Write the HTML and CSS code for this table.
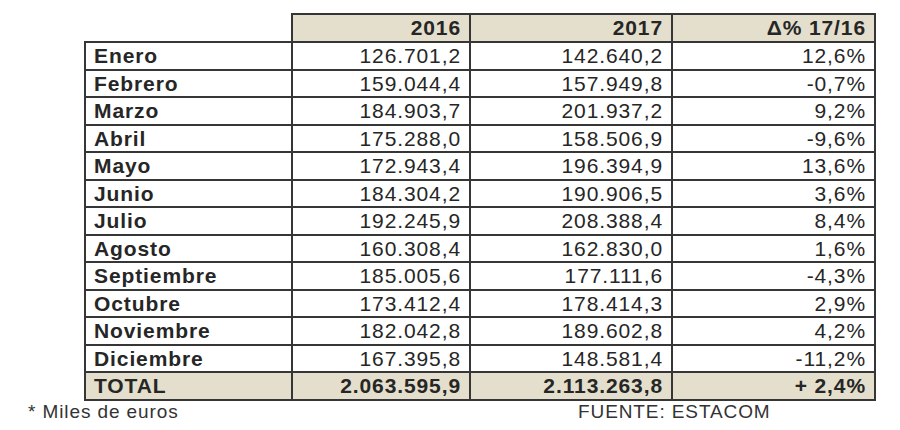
FILE: index.html
```html
<!DOCTYPE html>
<html lang="es">
<head>
<meta charset="utf-8">
<title>Exportaciones 2016-2017</title>
<link rel="stylesheet" href="styles.css">
</head>
<body>
<div class="page">
  <table class="data">
    <colgroup>
      <col class="c-label">
      <col class="c-num1">
      <col class="c-num2">
      <col class="c-pct">
    </colgroup>
    <thead>
      <tr class="head">
        <th class="blank"></th>
        <th>2016</th>
        <th>2017</th>
        <th>&Delta;% 17/16</th>
      </tr>
    </thead>
    <tbody>
      <tr><td class="label">Enero</td><td>126.701,2</td><td>142.640,2</td><td>12,6%</td></tr>
      <tr><td class="label">Febrero</td><td>159.044,4</td><td>157.949,8</td><td>-0,7%</td></tr>
      <tr><td class="label">Marzo</td><td>184.903,7</td><td>201.937,2</td><td>9,2%</td></tr>
      <tr><td class="label">Abril</td><td>175.288,0</td><td>158.506,9</td><td>-9,6%</td></tr>
      <tr><td class="label">Mayo</td><td>172.943,4</td><td>196.394,9</td><td>13,6%</td></tr>
      <tr><td class="label">Junio</td><td>184.304,2</td><td>190.906,5</td><td>3,6%</td></tr>
      <tr><td class="label">Julio</td><td>192.245,9</td><td>208.388,4</td><td>8,4%</td></tr>
      <tr><td class="label">Agosto</td><td>160.308,4</td><td>162.830,0</td><td>1,6%</td></tr>
      <tr><td class="label">Septiembre</td><td>185.005,6</td><td>177.111,6</td><td>-4,3%</td></tr>
      <tr><td class="label">Octubre</td><td>173.412,4</td><td>178.414,3</td><td>2,9%</td></tr>
      <tr><td class="label">Noviembre</td><td>182.042,8</td><td>189.602,8</td><td>4,2%</td></tr>
      <tr><td class="label">Diciembre</td><td>167.395,8</td><td>148.581,4</td><td>-11,2%</td></tr>
      <tr class="total"><td class="label">TOTAL</td><td>2.063.595,9</td><td>2.113.263,8</td><td>+ 2,4%</td></tr>
    </tbody>
  </table>
  <div class="notes">
    <span class="note">* Miles de euros</span>
    <span class="source">FUENTE: ESTACOM</span>
  </div>
</div>
</body>
</html>
```
FILE: styles.css
```css
html, body {
  margin: 0;
  padding: 0;
  background: #ffffff;
}

.page {
  padding-top: 13px;
  font-family: "Liberation Sans", Arial, sans-serif;
  color: #262626;
}

.data {
  margin-left: 84px;
  width: 790px;
  border-collapse: collapse;
  table-layout: fixed;
  font-size: 21px;
  letter-spacing: 0.9px;
}

.c-label { width: 207px; }
.c-num1 { width: 178px; }
.c-num2 { width: 202px; }
.c-pct { width: 203px; }

.data th,
.data td {
  border: 2px solid #363636;
  height: 24.5px;
  padding: 1px 8px 0 8px;
  text-align: right;
  line-height: 24.5px;
  white-space: nowrap;
}

.data th {
  font-weight: bold;
  background: #e3dfcc;
  height: 25px;
}

.data th.blank {
  background: transparent;
  border-top-color: transparent;
  border-left-color: transparent;
}

.data td.label {
  text-align: left;
  font-weight: bold;
}

.data tr.total td {
  background: #e3dfcc;
  font-weight: bold;
}

.notes {
  display: grid;
  grid-template-columns: 550px auto;
  padding-left: 28px;
  padding-top: 1px;
  font-size: 19px;
  letter-spacing: 0.9px;
  line-height: 20px;
  color: #333333;
}
```
